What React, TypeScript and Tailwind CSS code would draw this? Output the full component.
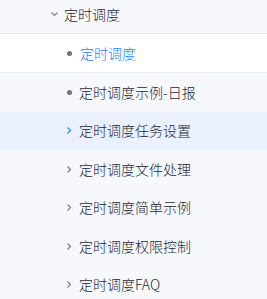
import React from "react";

const Right = ({ color }: { color: string }) => (
  <svg width="6" height="9" viewBox="0 0 6 9" className="shrink-0">
    <path d="M1.5 1.5 L4.5 4.5 L1.5 7.5" fill="none" stroke={color} strokeWidth="1.2" />
  </svg>
);

const Down = () => (
  <svg width="9" height="6" viewBox="0 0 9 6" className="shrink-0">
    <path d="M1.5 1.5 L4.5 4.5 L7.5 1.5" fill="none" stroke="#7a7f8f" strokeWidth="1.1" />
  </svg>
);

const Dot = () => <span className="block w-[5px] h-[5px] rounded-full bg-[#6e7382] shrink-0" />;

export default function App() {
  const font = { fontFamily: '"Noto Sans CJK SC", "Noto Sans", sans-serif' };
  const items: { t: string; kind: "dot" | "chev"; hl?: boolean }[] = [
    { t: "定时调度示例-日报", kind: "dot" },
    { t: "定时调度任务设置", kind: "chev", hl: true },
    { t: "定时调度文件处理", kind: "chev" },
    { t: "定时调度简单示例", kind: "chev" },
    { t: "定时调度权限控制", kind: "chev" },
    { t: "定时调度FAQ", kind: "chev" },
  ];
  return (
    <div className="w-[267px] h-[299px] bg-[#f7f8fc] overflow-hidden text-[14px] font-light text-[#232733]" style={font}>
      <div className="h-[33px] flex items-start pt-[4px] pl-[50px] gap-[5px]">
        <div className="flex items-center h-[20px]"><Down /></div>
        <span className="leading-[20px]">定时调度</span>
      </div>
      <div className="h-[40px] bg-white border-y border-[#ececef] flex items-center pl-[67px] gap-[8px]">
        <Dot />
        <span className="text-[#1585ff]">定时调度</span>
      </div>
      {items.map((it) => (
        <div
          key={it.t}
          className={`h-[38.5px] flex items-center pl-[66px] gap-[7px] ${it.hl ? "bg-[#eaf1fd]" : ""}`}
        >
          <div className="w-[6px] flex items-center justify-center">
            {it.kind === "dot" ? <Dot /> : <Right color={it.hl ? "#1a8cff" : "#7a7f8f"} />}
          </div>
          <span>{it.t}</span>
        </div>
      ))}
    </div>
  );
}
